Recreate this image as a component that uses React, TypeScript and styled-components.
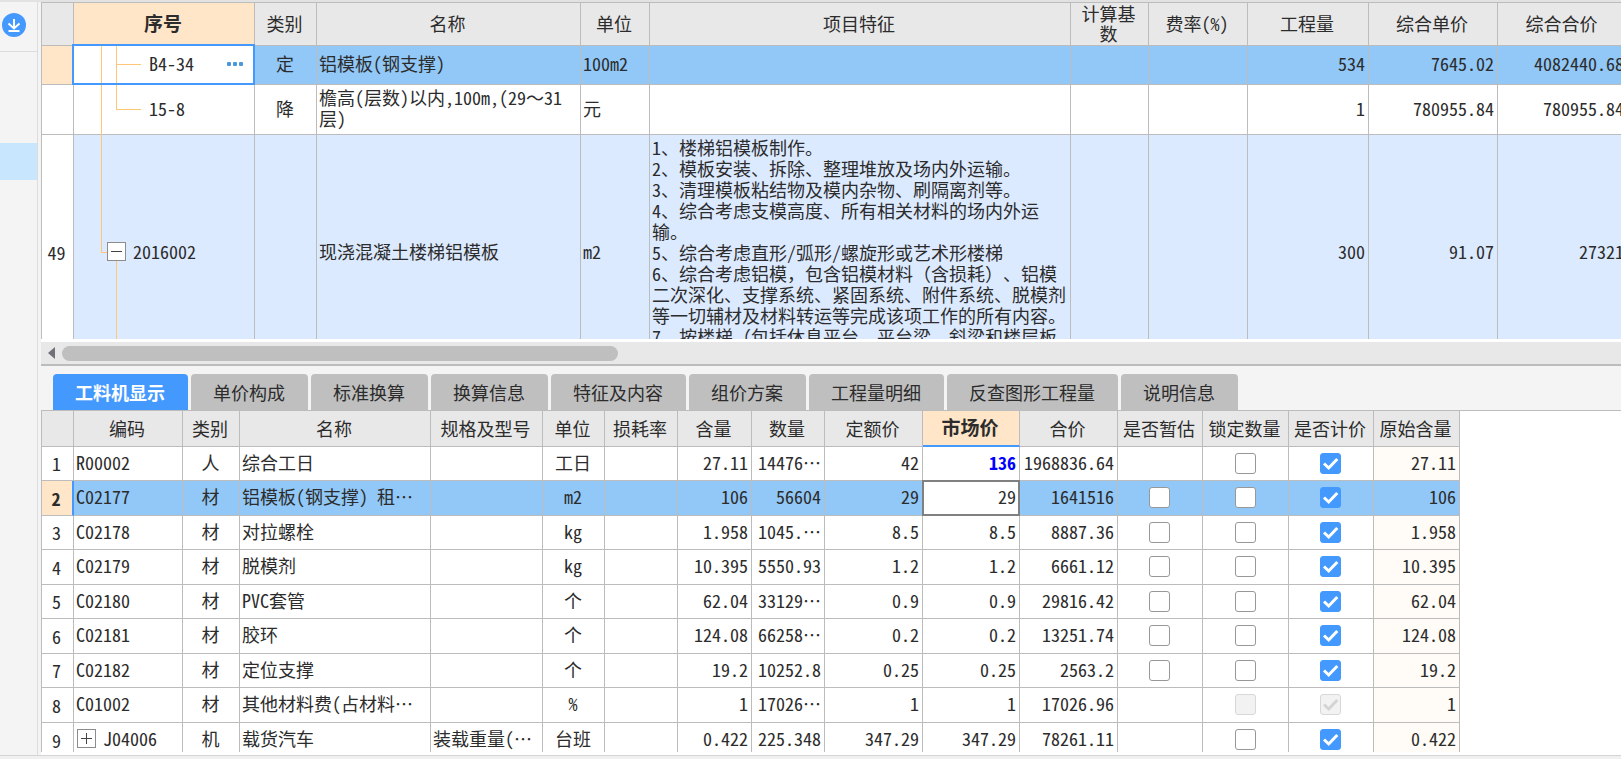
import React from "react";
import styled, { createGlobalStyle, css } from "styled-components";

const LINE = "#bcbcbc";
const BLUE = "#4499ff";
const PEACH = "#ffe6c8";
const SELECTED = "#91c8f7";
const GUIDE = "#ffc67a";

const Global = createGlobalStyle`
  *, *::before, *::after { box-sizing: border-box; }
  body {
    margin: 0;
    overflow: hidden;
    background: #f4f4f4;
    color: #2c2c2c;
    font-family: "Noto Sans CJK SC", sans-serif;
    font-size: 18px;
    line-height: 21px;
    font-feature-settings: "hwid";
    text-spacing-trim: space-all;
  }
  button, input { font: inherit; color: inherit; margin: 0; padding: 0; }
`;

const Shell = styled.div`
  height: 100vh;
  display: flex;
  flex-direction: column;
  border-top: 2px solid #e2e2e2;
`;

const Workspace = styled.div`
  flex: 1;
  min-height: 0;
  display: flex;
`;

const StatusEdge = styled.footer`
  height: 4px;
  background: #f0f0f0;
  border-top: 1px solid #d4d4d4;
`;

const Sidebar = styled.aside`
  flex: 0 0 38px;
  border-right: 1px solid #dcdcdc;
  margin-right: 3px;
`;

const SidebarTop = styled.div`
  height: 50px;
  padding: 11px 2px;
  border-bottom: 1px solid #dcdcdc;
`;

const RoundButton = styled.button`
  display: block;
  width: 24px;
  height: 24px;
  border: 0;
  border-radius: 50%;
  background: ${BLUE};
`;

const SidebarItem = styled.div`
  height: 37px;
  margin-top: 91px;
  background: #c9e6ff;
`;

const Main = styled.main`
  flex: 1;
  min-width: 0;
  display: flex;
  flex-direction: column;
`;

const UpperPane = styled.section`
  flex: 361 1 0;
  min-height: 0;
  display: flex;
  flex-direction: column;
  background: #fff;
  border-top: 1px solid ${LINE};
  border-bottom: 2px solid ${LINE};
`;

const LowerPane = styled.section`
  flex: 389 1 0;
  min-height: 0;
  display: flex;
  flex-direction: column;
`;

const GridView = styled.div`
  flex: 1;
  min-height: 0;
  overflow: hidden;
  margin-bottom: 3px;
`;

const LowerBody = styled.div`
  flex: 1;
  min-height: 0;
  display: flex;
  flex-direction: column;
  background: #fff;
  border-top: 1px solid ${LINE};
`;

const ScrollTrack = styled.div`
  flex: 0 0 22px;
  display: flex;
  align-items: center;
  gap: 7px;
  padding-left: 7px;
  background: #e8e8e8;
`;

const ScrollArrow = styled.button`
  width: 7px;
  height: 12px;
  border: 0;
  background: #707078;
  clip-path: polygon(100% 0, 100% 100%, 0 50%);
`;

const ScrollThumb = styled.div`
  width: 556px;
  height: 15px;
  border-radius: 8px;
  background: #bfbfbf;
`;

const DataTable = styled.table`
  table-layout: fixed;
  border-collapse: separate;
  border-spacing: 0;
  width: 0;
`;

const HeadCell = styled.th<{ $active?: boolean; $underline?: boolean; $h: number }>`
  height: ${(p) => p.$h}px;
  padding: 0 2px 2px 0;
  background: #e8e8e8;
  border-right: 1px solid ${LINE};
  border-bottom: 1px solid ${LINE};
  font-weight: 400;
  line-height: 20px;
  white-space: pre;
  &:first-child { border-left: 1px solid ${LINE}; }
  ${(p) => p.$active && css`
    background: ${PEACH};
    font-size: 19px;
    font-weight: 700;
  `}
  ${(p) => p.$underline && css`
    border-bottom: 2px solid ${BLUE};
  `}
`;

type Align = "left" | "center" | "right";

const Cell = styled.td<{ $align?: Align; $tone?: string; $top?: boolean }>`
  position: relative;
  padding: ${(p) => (p.$top ? "2px 3px 0 2px" : "0 3px 3px 2px")};
  background: ${(p) => p.$tone || "transparent"};
  border-right: 1px solid ${LINE};
  border-bottom: 1px solid ${LINE};
  text-align: ${(p) => p.$align || "left"};
  vertical-align: ${(p) => (p.$top ? "top" : "middle")};
  white-space: pre;
`;

const RowNumber = styled.th<{ $active?: boolean; $marker?: boolean }>`
  padding: 0 2px 0 0;
  background: ${(p) => (p.$active ? PEACH : "#fff")};
  border-left: 1px solid ${LINE};
  border-right: ${(p) => (p.$marker ? `2px solid ${BLUE}` : `1px solid ${LINE}`)};
  border-bottom: 1px solid ${LINE};
  font-weight: ${(p) => (p.$marker ? 700 : 400)};
`;

const UpperRow = styled.tr<{ $h: number; $tone?: string }>`
  height: ${(p) => p.$h}px;
  background: ${(p) => p.$tone || "#fff"};
`;

const LowerRow = styled.tr<{ $selected?: boolean }>`
  height: 35px;
  background: ${(p) => (p.$selected ? SELECTED : "#fff")};
  &:nth-child(odd) { height: 34px; }
  &:last-child { height: 35px; }
`;

const FocusCell = styled(Cell)`
  background: #fff;
  &::after {
    content: "";
    position: absolute;
    inset: -2px -1px -1px -2px;
    border: 2px solid ${BLUE};
    pointer-events: none;
  }
`;

const EditCell = styled(Cell)`
  background: #fff;
  &::after {
    content: "";
    position: absolute;
    inset: -1px;
    border: 2px solid #808080;
    pointer-events: none;
  }
`;

const PriceValue = styled.b`
  color: #0000ff;
`;

/* full-width punctuation keeps its whole em */
const FullWidth = styled.span`
  font-feature-settings: normal;
`;

/* tree drawing inside the first column */
const GuideV = styled.i<{ $x: number; $to?: string; $from?: string }>`
  position: absolute;
  left: ${(p) => p.$x}px;
  top: ${(p) => p.$from || "0"};
  bottom: ${(p) => p.$to || "-1px"};
  width: 1px;
  background: ${GUIDE};
`;

const GuideH = styled.i<{ $x: number; $w: number }>`
  position: absolute;
  left: ${(p) => p.$x}px;
  top: calc(50% - 1px);
  width: ${(p) => p.$w}px;
  height: 1px;
  background: ${GUIDE};
`;

const TreeItem = styled.div<{ $indent: number }>`
  position: relative;
  display: flex;
  align-items: center;
  gap: 7px;
  padding: 0 8px 0 ${(p) => p.$indent}px;
`;

const Toggle = styled.button`
  display: block;
  width: 19px;
  height: 19px;
  border: 1px solid #8c8c8c;
  background: #fff;
`;

const MoreButton = styled.button`
  display: flex;
  gap: 2px;
  margin-left: auto;
  padding: 6px 0;
  border: 0;
  background: none;
`;

const MoreDot = styled.i`
  width: 4px;
  height: 4px;
  border-radius: 1px;
  background: #4a97dc;
`;

const TabBar = styled.div`
  display: flex;
  gap: 3px;
  padding: 8px 0 0 12px;
`;

const Tab = styled.button<{ $active?: boolean }>`
  height: 36px;
  padding: 0 23px 0 22px;
  border: 0;
  border-radius: 4px 4px 0 0;
  background: ${(p) => (p.$active ? BLUE : "#bfbfbf")};
  color: ${(p) => (p.$active ? "#fff" : "#2c2c2c")};
  font-weight: ${(p) => (p.$active ? 700 : 400)};
  white-space: nowrap;
`;

const CheckWrap = styled.span`
  display: grid;
  justify-content: center;
  padding-top: 2px;
  svg { grid-area: 1 / 1; pointer-events: none; }
`;

const CheckInput = styled.input`
  grid-area: 1 / 1;
  appearance: none;
  width: 21px;
  height: 21px;
  border: 1px solid #989898;
  border-radius: 3px;
  background: #fff;
  &:checked { background: ${BLUE}; border-color: ${BLUE}; }
  &:disabled { background: #f2f2f2; border-color: #d8d8d8; }
`;

type State = "on" | "off" | "dim" | "dimOn" | "";

function Check({ state, label }: { state: State; label: string }) {
  if (!state) return null;
  const on = state === "on" || state === "dimOn";
  const dim = state === "dim" || state === "dimOn";
  return (
    <CheckWrap>
      <CheckInput type="checkbox" defaultChecked={on} disabled={dim} aria-label={label} />
      {on && (
        <svg width="21" height="21" viewBox="0 0 21 21" fill="none">
          <path d="M4 10.5 L8.7 15 L17.3 6" stroke={dim ? "#d4d4d4" : "#fff"} strokeWidth="3" />
        </svg>
      )}
    </CheckWrap>
  );
}

function ToggleBox({ open }: { open: boolean }) {
  return (
    <Toggle aria-label={open ? "收起" : "展开"}>
      <svg width="17" height="17" viewBox="0 0 17 17" style={{ display: "block" }}>
        <path d={open ? "M3 8.5H14" : "M3 8.5H14M8.5 3V14"} stroke="#444" strokeWidth="1" />
      </svg>
    </Toggle>
  );
}

function Wide({ text }: { text: string }) {
  return (
    <>
      {text.split(/([，（）～]+)/).map((part, i) =>
        i % 2 ? <FullWidth key={i}>{part}</FullWidth> : part
      )}
    </>
  );
}

const upperCols = [33, 181, 62, 264, 69, 421, 78, 99, 121, 129, 130];
const upperHeads = ["", "序号", "类别", "名称", "单位", "项目特征", "计算基\n数", "费率(%)", "工程量", "综合单价", "综合合价"];

const features = [
  "1、楼梯铝模板制作。",
  "2、模板安装、拆除、整理堆放及场内外运输。",
  "3、清理模板粘结物及模内杂物、刷隔离剂等。",
  "4、综合考虑支模高度、所有相关材料的场内外运",
  "输。",
  "5、综合考虑直形/弧形/螺旋形或艺术形楼梯",
  "6、综合考虑铝模，包含铝模材料（含损耗）、铝模",
  "二次深化、支撑系统、紧固系统、附件系统、脱模剂",
  "等一切辅材及材料转运等完成该项工作的所有内容。",
  "7、按楼梯（包括休息平台、平台梁、斜梁和楼层板",
].join("\n");

const tabs = ["工料机显示", "单价构成", "标准换算", "换算信息", "特征及内容", "组价方案", "工程量明细", "反查图形工程量", "说明信息"];

const lowerCols = [33, 109, 57, 191, 112, 62, 73, 74, 73, 98, 97, 98, 85, 86, 85, 86];
const lowerHeads = ["", "编码", "类别", "名称", "规格及型号", "单位", "损耗率", "含量", "数量", "定额价", "市场价", "合价", "是否暂估", "锁定数量", "是否计价", "原始含量"];

interface Item {
  code: string;
  kind: string;
  name: string;
  spec?: string;
  unit: string;
  content: string;
  qty: string;
  quota: string;
  market: string;
  total: string;
  est: State;
  lock: State;
  priced: State;
  group?: boolean;
}

const items: Item[] = [
  { code: "R00002", kind: "人", name: "综合工日", unit: "工日", content: "27.11", qty: "14476…", quota: "42", market: "136", total: "1968836.64", est: "", lock: "off", priced: "on" },
  { code: "C02177", kind: "材", name: "铝模板(钢支撑) 租…", unit: "m2", content: "106", qty: "56604", quota: "29", market: "29", total: "1641516", est: "off", lock: "off", priced: "on" },
  { code: "C02178", kind: "材", name: "对拉螺栓", unit: "kg", content: "1.958", qty: "1045.…", quota: "8.5", market: "8.5", total: "8887.36", est: "off", lock: "off", priced: "on" },
  { code: "C02179", kind: "材", name: "脱模剂", unit: "kg", content: "10.395", qty: "5550.93", quota: "1.2", market: "1.2", total: "6661.12", est: "off", lock: "off", priced: "on" },
  { code: "C02180", kind: "材", name: "PVC套管", unit: "个", content: "62.04", qty: "33129…", quota: "0.9", market: "0.9", total: "29816.42", est: "off", lock: "off", priced: "on" },
  { code: "C02181", kind: "材", name: "胶环", unit: "个", content: "124.08", qty: "66258…", quota: "0.2", market: "0.2", total: "13251.74", est: "off", lock: "off", priced: "on" },
  { code: "C02182", kind: "材", name: "定位支撑", unit: "个", content: "19.2", qty: "10252.8", quota: "0.25", market: "0.25", total: "2563.2", est: "off", lock: "off", priced: "on" },
  { code: "C01002", kind: "材", name: "其他材料费(占材料…", unit: "%", content: "1", qty: "17026…", quota: "1", market: "1", total: "17026.96", est: "", lock: "dim", priced: "dimOn" },
  { code: "J04006", kind: "机", name: "载货汽车", spec: "装载重量(…", unit: "台班", content: "0.422", qty: "225.348", quota: "347.29", market: "347.29", total: "78261.11", est: "", lock: "off", priced: "on", group: true },
];

function Columns({ widths }: { widths: number[] }) {
  return (
    <colgroup>
      {widths.map((w, i) => (
        <col key={i} width={w} />
      ))}
    </colgroup>
  );
}

function UpperTable() {
  return (
    <DataTable>
      <Columns widths={upperCols} />
      <thead>
        <tr>
          {upperHeads.map((h, i) => (
            <HeadCell key={i} $h={43} $active={i === 1}>{h}</HeadCell>
          ))}
        </tr>
      </thead>
      <tbody>
        <UpperRow $h={39} $tone={SELECTED}>
          <RowNumber $active />
          <FocusCell>
            <GuideV $x={27} />
            <GuideV $x={42} />
            <GuideH $x={42} $w={25} />
            <TreeItem $indent={73}>
              B4-34
              <MoreButton aria-label="更多">
                <MoreDot />
                <MoreDot />
                <MoreDot />
              </MoreButton>
            </TreeItem>
          </FocusCell>
          <Cell $align="center">定</Cell>
          <Cell>铝模板(钢支撑)</Cell>
          <Cell>100m2</Cell>
          <Cell />
          <Cell />
          <Cell />
          <Cell $align="right">534</Cell>
          <Cell $align="right">7645.02</Cell>
          <Cell $align="right">4082440.68</Cell>
        </UpperRow>
        <UpperRow $h={50}>
          <RowNumber />
          <Cell>
            <GuideV $x={27} />
            <GuideV $x={42} $to="50%" />
            <GuideH $x={42} $w={25} />
            <TreeItem $indent={73}>15-8</TreeItem>
          </Cell>
          <Cell $align="center">降</Cell>
          <Cell><Wide text={"檐高(层数)以内,100m,(29～31\n层)"} /></Cell>
          <Cell>元</Cell>
          <Cell />
          <Cell />
          <Cell />
          <Cell $align="right">1</Cell>
          <Cell $align="right">780955.84</Cell>
          <Cell $align="right">780955.84</Cell>
        </UpperRow>
        <UpperRow $h={236} $tone="#dceaff">
          <RowNumber>49</RowNumber>
          <Cell>
            <GuideV $x={27} $to="50%" />
            <GuideH $x={27} $w={8} />
            <GuideV $x={42} $from="50%" />
            <TreeItem $indent={31}>
              <ToggleBox open />
              2016002
            </TreeItem>
          </Cell>
          <Cell />
          <Cell>现浇混凝土楼梯铝模板</Cell>
          <Cell>m2</Cell>
          <Cell $top><Wide text={features} /></Cell>
          <Cell />
          <Cell />
          <Cell $align="right">300</Cell>
          <Cell $align="right">91.07</Cell>
          <Cell $align="right">27321</Cell>
        </UpperRow>
      </tbody>
    </DataTable>
  );
}

function LowerTable() {
  return (
    <DataTable>
      <Columns widths={lowerCols} />
      <thead>
        <tr>
          {lowerHeads.map((h, i) => (
            <HeadCell key={i} $h={36} $active={i === 10} $underline={i === 10}>{h}</HeadCell>
          ))}
        </tr>
      </thead>
      <tbody>
        {items.map((r, i) => {
          const selected = i === 1;
          return (
            <LowerRow key={r.code} $selected={selected}>
              <RowNumber $active={selected} $marker={selected}>{i + 1}</RowNumber>
              <Cell>
                {r.group ? (
                  <TreeItem $indent={1}>
                    <ToggleBox open={false} />
                    {r.code}
                  </TreeItem>
                ) : (
                  r.code
                )}
              </Cell>
              <Cell $align="center">{r.kind}</Cell>
              <Cell>{r.name}</Cell>
              <Cell>{r.spec}</Cell>
              <Cell $align="center">{r.unit}</Cell>
              <Cell />
              <Cell $align="right">{r.content}</Cell>
              <Cell $align="right">{r.qty}</Cell>
              <Cell $align="right">{r.quota}</Cell>
              {selected ? (
                <EditCell $align="right">{r.market}</EditCell>
              ) : (
                <Cell $align="right">{i === 0 ? <PriceValue>{r.market}</PriceValue> : r.market}</Cell>
              )}
              <Cell $align="right">{r.total}</Cell>
              <Cell><Check state={r.est} label={`${r.name} 是否暂估`} /></Cell>
              <Cell><Check state={r.lock} label={`${r.name} 锁定数量`} /></Cell>
              <Cell><Check state={r.priced} label={`${r.name} 是否计价`} /></Cell>
              <Cell $align="right" $tone={selected ? undefined : "#fffcf7"}>{r.content}</Cell>
            </LowerRow>
          );
        })}
      </tbody>
    </DataTable>
  );
}

export default function App() {
  return (
    <Shell lang="zh-CN">
      <Global />
      <Workspace>
        <Sidebar>
          <SidebarTop>
            <RoundButton aria-label="下载">
              <svg width="24" height="24" viewBox="0 0 24 24" fill="none" stroke="#fff" strokeWidth="2" style={{ display: "block" }}>
                <path d="M12 6V15M6.500 10.500L12 15.500L17.500 10.500M6.500 18H17.500" />
              </svg>
            </RoundButton>
          </SidebarTop>
          <SidebarItem />
        </Sidebar>
        <Main>
          <UpperPane>
            <GridView>
              <UpperTable />
            </GridView>
            <ScrollTrack>
              <ScrollArrow aria-label="向左滚动" />
              <ScrollThumb />
            </ScrollTrack>
          </UpperPane>
          <LowerPane>
            <TabBar role="tablist">
              {tabs.map((t, i) => (
                <Tab key={t} role="tab" aria-selected={i === 0} $active={i === 0}>{t}</Tab>
              ))}
            </TabBar>
            <LowerBody>
              <GridView>
                <LowerTable />
              </GridView>
            </LowerBody>
          </LowerPane>
        </Main>
      </Workspace>
      <StatusEdge />
    </Shell>
  );
}
